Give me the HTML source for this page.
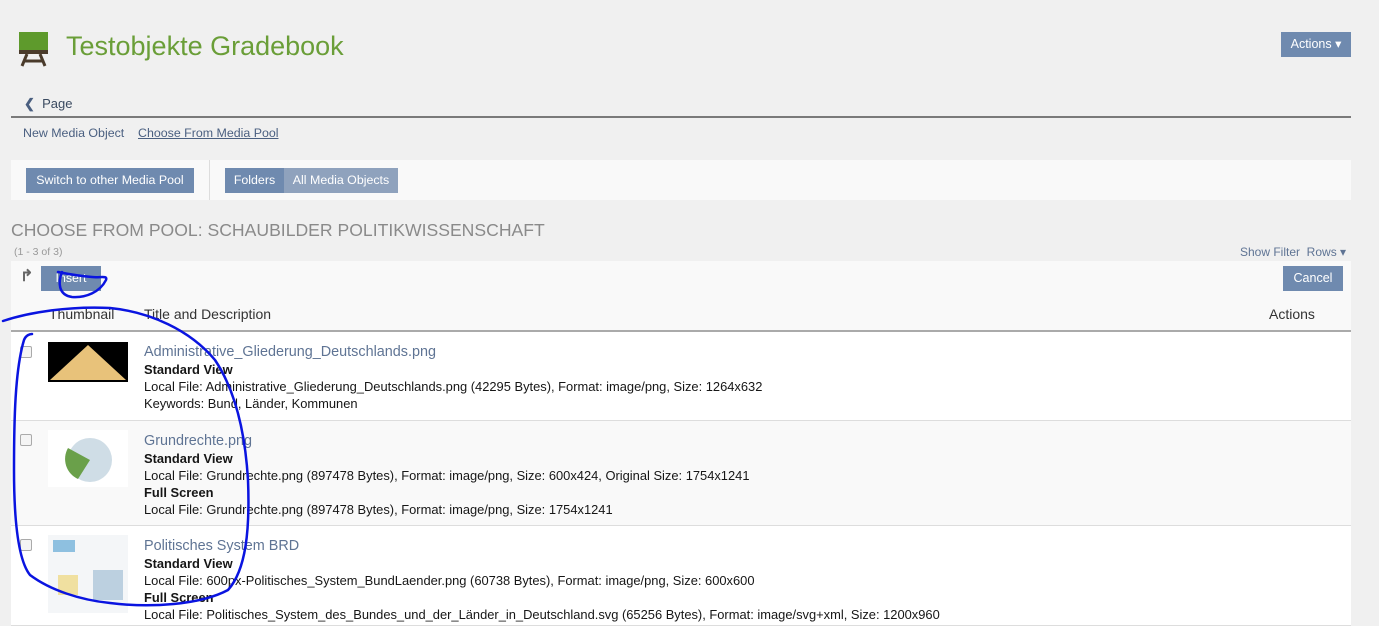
<!DOCTYPE html>
<html><head><meta charset="utf-8"><style>
*{box-sizing:border-box;margin:0;padding:0}
body{width:1379px;height:613px;overflow:hidden;background:#f0f0f0;font-family:"Liberation Sans",sans-serif;color:#161616;position:relative}
.a{position:absolute}
.btn{position:absolute;background:#6f8aaf;color:#fff;font-size:12.4px;text-align:center}
.row{position:absolute;left:11px;width:1340px;border-bottom:1px solid #ddd}
.row .t{position:absolute;left:133px;font-size:12.9px;line-height:17px;white-space:nowrap}
.row .t .h{color:#5f7494;font-size:14.4px;line-height:18px}
.row b{font-weight:bold}
.cb{position:absolute;left:9px;width:12px;height:12px;border:1px solid #aaa;border-radius:2px;background:#f4f4f4}
</style></head><body>
<svg class="a" style="left:18px;top:31px" width="32" height="36"><rect x="1" y="1" width="29" height="19" fill="#5e9a2c"/><rect x="1" y="19" width="29" height="4" fill="#4a3b2b"/><path d="M9 23 L4 35 M22 23 L27 35 M7 30 H25" stroke="#4a3b2b" stroke-width="3"/></svg>
<div class="a" style="left:66px;top:31px;font-size:27px;color:#6a9e38">Testobjekte Gradebook</div>
<div class="btn" style="left:1281px;top:32px;width:70px;height:25px;line-height:25px;font-size:12.5px">Actions ▾</div>
<div class="a" style="left:24px;top:96px;font-size:13px;color:#3a4a60"><span style="font-weight:bold;color:#4a5f80">&#10094;</span>&nbsp; Page</div>
<div class="a" style="left:11px;top:116px;width:1340px;height:2px;background:#7a7a7a"></div>
<div class="a" style="left:23px;top:126px;font-size:12.4px;color:#4a5f80">New Media Object</div>
<div class="a" style="left:138px;top:126px;font-size:12.4px;color:#4a5f80;text-decoration:underline">Choose From Media Pool</div>
<div class="a" style="left:11px;top:160px;width:1340px;height:40px;background:#f9f9f9"></div>
<div class="a" style="left:209px;top:160px;width:1px;height:40px;background:#ddd"></div>
<div class="btn" style="left:26px;top:168px;width:168px;height:25px;line-height:25px">Switch to other Media Pool</div>
<div class="btn" style="left:225px;top:168px;width:59px;height:25px;line-height:25px">Folders</div>
<div class="btn" style="left:284px;top:168px;width:114px;height:25px;line-height:25px;background:#8fa2bd">All Media Objects</div>
<div class="a" style="left:11px;top:220px;font-size:17.6px;color:#8a8a8a">CHOOSE FROM POOL: SCHAUBILDER POLITIKWISSENSCHAFT</div>
<div class="a" style="left:14px;top:246px;font-size:10.5px;color:#999">(1 - 3 of 3)</div>
<div class="a" style="left:1240px;top:245px;font-size:12px;color:#5f7494">Show Filter &nbsp;Rows ▾</div>
<div class="a" style="left:11px;top:261px;width:1340px;height:35px;background:#f9f9f9"></div>
<div class="a" style="left:20px;top:266px;font-size:16px;color:#666;font-weight:bold">↱</div>
<div class="btn" style="left:41px;top:266px;width:60px;height:25px;line-height:25px">Insert</div>
<div class="btn" style="left:1283px;top:266px;width:60px;height:25px;line-height:25px;font-size:12.5px">Cancel</div>
<div class="a" style="left:11px;top:296px;width:1340px;height:36px;background:#f9f9f9;border-bottom:2px solid #aaa"></div>
<div class="a" style="left:49px;top:306px;font-size:14px;color:#333">Thumbnail</div>
<div class="a" style="left:144px;top:306px;font-size:14px;color:#333">Title and Description</div>
<div class="a" style="left:1269px;top:306px;font-size:14px;color:#333">Actions</div>
<div class="row" style="top:332px;height:89px;background:#fff"><div class="cb" style="top:14px"></div>
<svg class="a" style="left:37px;top:10px" width="80" height="40"><rect width="80" height="40" fill="#000"/><path d="M2 38 L40 3 L78 38Z" fill="#e8c27a"/></svg>
<div class="t" style="top:11px"><div class="h">Administrative_Gliederung_Deutschlands.png</div><b>Standard View</b><br>Local File: Administrative_Gliederung_Deutschlands.png (42295 Bytes), Format: image/png, Size: 1264x632<br>Keywords: Bund, Länder, Kommunen</div></div>
<div class="row" style="top:421px;height:105px;background:#f9f9f9"><div class="cb" style="top:13px"></div>
<svg class="a" style="left:37px;top:9px" width="80" height="57"><rect width="80" height="57" fill="#fff"/><circle cx="42" cy="30" r="22" fill="#cfdde6"/><path d="M42 30 L20 18 A22 22 0 0 0 30 49Z" fill="#6aa04a"/></svg>
<div class="t" style="top:11px"><div class="h">Grundrechte.png</div><b>Standard View</b><br>Local File: Grundrechte.png (897478 Bytes), Format: image/png, Size: 600x424, Original Size: 1754x1241<br><b>Full Screen</b><br>Local File: Grundrechte.png (897478 Bytes), Format: image/png, Size: 1754x1241</div></div>
<div class="row" style="top:526px;height:100px;background:#fff"><div class="cb" style="top:13px"></div>
<svg class="a" style="left:37px;top:9px" width="80" height="78"><rect width="80" height="78" fill="#f4f6f8"/><rect x="5" y="5" width="22" height="12" fill="#8ec0e0"/><rect x="45" y="35" width="30" height="30" fill="#bcd0e0"/><rect x="10" y="40" width="20" height="20" fill="#f0e0a0"/></svg>
<div class="t" style="top:11px"><div class="h">Politisches System BRD</div><b>Standard View</b><br>Local File: 600px-Politisches_System_BundLaender.png (60738 Bytes), Format: image/png, Size: 600x600<br><b>Full Screen</b><br>Local File: Politisches_System_des_Bundes_und_der_Länder_in_Deutschland.svg (65256 Bytes), Format: image/svg+xml, Size: 1200x960</div></div>
<svg class="a" style="left:0;top:0" width="1379" height="613" fill="none" stroke="#0a14e0" stroke-width="2.5" stroke-linecap="round">
<path d="M62 272 C58 282 58 295 72 297 C86 298 100 292 106 280 C108 275 100 278 92 277 C80 276 68 274 58 272"/>
<path d="M3 321 C30 312 70 306 110 308 C150 312 190 330 215 360 C235 390 245 430 248 480 C250 530 246 570 228 590 C200 605 150 608 110 603 C80 600 50 590 30 575 C18 560 14 520 14 470 C14 420 15 370 24 340 C26 335 30 334 32 334"/>
</svg>
</body></html>
